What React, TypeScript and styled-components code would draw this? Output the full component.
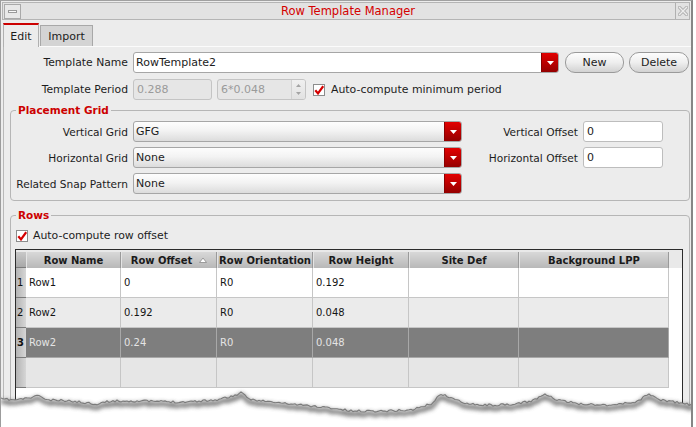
import React from "react";
import styled, { createGlobalStyle, css } from "styled-components";

const Global = createGlobalStyle`
  html, body { margin: 0; padding: 0; background: #fff; }
  body { font-family: "DejaVu Sans", "Liberation Sans", sans-serif; font-size: 11px; color: #1c1c1c; }
  #root { width: 696px; height: 427px; overflow: hidden; }
`;

const Window = styled.div`
  position: relative;
  width: 693px;
  height: 427px;
  box-sizing: border-box;
  border-left: 1px solid #9c9c9c;
  border-top: 1px solid #a0a0a0;
  border-right: 2px solid #868686;
  background: #ececec;
  display: flex;
  flex-direction: column;
  overflow: hidden;
`;

const TitleBar = styled.div`
  margin: 1px 1px 0 1px;
  height: 18px;
  box-sizing: border-box;
  border: 1px solid #b4b4b4;
  background: #e2e2e2;
  display: flex;
  align-items: center;
  flex-shrink: 0;
`;

const MinButton = styled.div`
  width: 17px;
  height: 15px;
  box-sizing: border-box;
  margin-left: 1px;
  border: 1px solid #a9a9a9;
  background: #e8e8e8;
  display: flex;
  align-items: center;
  justify-content: center;
`;

const MinBar = styled.div`
  width: 9px;
  height: 3px;
  box-sizing: border-box;
  border: 1px solid #9a9a9a;
  background: #fafafa;
`;

const Title = styled.div`
  flex: 1;
  text-align: center;
  color: #d40000;
  font-size: 11.5px;
  line-height: 16px;
`;

const CloseButton = styled.div`
  width: 14px;
  height: 16px;
  box-sizing: border-box;
  border-left: 1px solid #b0b0b0;
  display: flex;
  align-items: center;
  justify-content: center;
`;

const TabBar = styled.div`
  margin-top: 3px;
  padding-left: 2px;
  height: 23px;
  display: flex;
  align-items: flex-end;
  flex-shrink: 0;
`;

const Tab = styled.div<{ $active?: boolean }>`
  box-sizing: border-box;
  display: flex;
  align-items: center;
  justify-content: center;
  font-size: 11px;
  ${(p) =>
    p.$active
      ? css`
          width: 36px;
          height: 24px;
          border-top: 2px solid #cc0000;
          border-left: 1px solid #b0b0b0;
          border-right: 1px solid #b0b0b0;
          background: #ececec;
          margin-bottom: -1px;
          position: relative;
          z-index: 1;
          padding-top: 1px;
        `
      : css`
          width: 53px;
          height: 21px;
          margin-left: 1px;
          border: 1px solid #a8a8a8;
          border-bottom: none;
          background: #d4d4d4;
          padding-top: 1px;
        `}
`;

const Panel = styled.div`
  margin-left: 2px;
  flex: 1;
  border-top: 1px solid #fbfbfb;
  border-left: 1px solid #b8b8b8;
  padding-top: 5px;
  display: flex;
  flex-direction: column;
  min-height: 0;
`;

const FormRow = styled.div<{ $mt?: number }>`
  display: flex;
  align-items: center;
  height: 21px;
  gap: 5px;
  margin-top: ${(p) => p.$mt ?? 0}px;
  flex-shrink: 0;
`;

const Label = styled.div<{ $w?: number }>`
  width: ${(p) => p.$w ?? 124}px;
  flex-shrink: 0;
  display: flex;
  justify-content: flex-end;
  white-space: nowrap;
  font-size: 10.8px;
`;

const GridLabel = styled.div`
  display: flex;
  justify-content: flex-end;
  align-items: center;
  padding-right: 5px;
  white-space: nowrap;
  font-size: 10.6px;
`;

const ComboBox = styled.div<{ $w?: number; $white?: boolean }>`
  width: ${(p) => (p.$w ? `${p.$w}px` : "auto")};
  height: 21px;
  box-sizing: border-box;
  border: 1px solid #a6a6a6;
  border-radius: 3px;
  background: ${(p) =>
    p.$white ? "#fff" : "linear-gradient(#fdfdfd, #f3f3f3 45%, #dcdcdc)"};
  display: flex;
  align-items: stretch;
  overflow: hidden;
  flex-shrink: 0;
`;

const ComboText = styled.div`
  flex: 1;
  padding-left: 2px;
  display: flex;
  align-items: center;
  font-size: 11px;
`;

const ComboArrow = styled.div`
  width: 16px;
  background: linear-gradient(#e20000, #b80000 55%, #940000);
  border-left: 1px solid #8a0000;
  display: flex;
  align-items: center;
  justify-content: center;
`;

const PillButton = styled.div<{ $w: number; $ml?: number }>`
  width: ${(p) => p.$w}px;
  height: 21px;
  margin-left: ${(p) => p.$ml ?? 0}px;
  box-sizing: border-box;
  border: 1px solid #9a9a9a;
  border-radius: 10px;
  background: linear-gradient(#fdfdfd, #eeeeee 50%, #d2d2d2);
  display: flex;
  align-items: center;
  justify-content: center;
  font-size: 11px;
  flex-shrink: 0;
`;

const TextField = styled.div<{ $w: number; $disabled?: boolean }>`
  width: ${(p) => p.$w}px;
  height: 21px;
  box-sizing: border-box;
  border: 1px solid ${(p) => (p.$disabled ? "#c4c4c4" : "#bdbdbd")};
  border-radius: 3px;
  background: ${(p) => (p.$disabled ? "#e6e6e6" : "#fff")};
  color: ${(p) => (p.$disabled ? "#9a9a9a" : "#1c1c1c")};
  padding-left: 3px;
  display: flex;
  align-items: center;
  font-size: 11px;
  flex-shrink: 0;
  overflow: hidden;
`;

const SpinText = styled.div`
  flex: 1;
`;

const Spinner = styled.div`
  width: 14px;
  align-self: stretch;
  border-left: 1px solid #d2d2d2;
  background: linear-gradient(#f0f0f0, #e2e2e2);
  display: flex;
  flex-direction: column;
  align-items: center;
  justify-content: space-between;
  padding: 4px 0;
  box-sizing: border-box;
`;

const CheckBox = styled.div<{ $ml?: number }>`
  width: 12px;
  height: 12px;
  margin-left: ${(p) => p.$ml ?? 0}px;
  box-sizing: border-box;
  border: 1px solid #8c8c8c;
  background: #fff;
  display: flex;
  align-items: center;
  justify-content: center;
  flex-shrink: 0;
`;

const CheckLabel = styled.div<{ $ml?: number }>`
  margin-left: ${(p) => p.$ml ?? 0}px;
  white-space: nowrap;
  font-size: 10.9px;
`;

const Group = styled.div<{ $mt: number; $grow?: boolean }>`
  position: relative;
  margin: ${(p) => p.$mt}px 1px 0 6px;
  border: 1px solid #b6b6b6;
  border-radius: 4px;
  ${(p) =>
    p.$grow
      ? css`
          flex: 1;
          margin-bottom: -12px;
          padding-top: 12px;
          display: flex;
          flex-direction: column;
          min-height: 0;
        `
      : css`
          padding: 10px 0 6px 0;
          flex-shrink: 0;
        `}
`;

const Legend = styled.div`
  position: absolute;
  top: -7px;
  left: 5px;
  padding: 0 2px;
  background: #ececec;
  color: #cc0000;
  font-weight: bold;
  font-size: 10.5px;
  line-height: 13px;
`;

const GridForm = styled.div`
  display: grid;
  grid-template-columns: 122px 329px 121px 80px;
  grid-auto-rows: 21px;
  row-gap: 5px;
`;

const CheckRow = styled.div`
  display: flex;
  align-items: center;
  gap: 5px;
  height: 15px;
  margin-left: 5px;
  flex-shrink: 0;
`;

const TableFrame = styled.div`
  margin: 6px 0 0 4px;
  width: 668px;
  box-sizing: border-box;
  border: 1px solid #2b2b2b;
  border-bottom: none;
  background: #fff;
  flex: 1;
  display: flex;
  flex-direction: column;
`;

const HeaderBand = styled.div`
  display: flex;
  background: #e9e9e9;
  padding-top: 2px;
`;

const HeadCell = styled.div<{ $w: number }>`
  width: ${(p) => p.$w}px;
  height: 16px;
  box-sizing: border-box;
  flex-shrink: 0;
  background: linear-gradient(#d8d8d8, #b8b8b8);
  border-right: 1px solid #9a9a9a;
  border-left: 1px solid #e4e4e4;
  font-weight: bold;
  font-size: 10px;
  color: #1a1a1a;
  white-space: nowrap;
  display: flex;
  align-items: center;
  justify-content: center;
  gap: 7px;
`;

const CornerCell = styled.div`
  width: 10px;
  height: 16px;
  box-sizing: border-box;
  flex-shrink: 0;
  background: linear-gradient(#c8c8c8, #a8a8a8);
  border-bottom: 1px solid #7a7a7a;
`;

type Tone = "white" | "alt" | "sel" | "empty";

const toneBg: Record<Tone, string> = {
  white: "#ffffff",
  alt: "#ebebeb",
  sel: "#7e7e7e",
  empty: "#e6e6e6",
};

const DataRow = styled.div`
  display: flex;
  height: 30px;
`;

const RowHead = styled.div<{ $bold?: boolean }>`
  width: 10px;
  box-sizing: border-box;
  flex-shrink: 0;
  background: linear-gradient(to right, #b4b4b4, #d6d6d6);
  border-bottom: 1px solid #7a7a7a;
  font-size: 10px;
  font-weight: ${(p) => (p.$bold ? "bold" : "normal")};
  color: #111;
  display: flex;
  align-items: center;
  padding-left: 1px;
`;

const Cell = styled.div<{ $w: number; $tone: Tone }>`
  width: ${(p) => p.$w}px;
  box-sizing: border-box;
  flex-shrink: 0;
  background: ${(p) => toneBg[p.$tone]};
  color: ${(p) => (p.$tone === "sel" ? "#e4e4e4" : "#151515")};
  border-right: 1px solid ${(p) => (p.$tone === "sel" ? "#a8a8a8" : "#c6c6c6")};
  border-bottom: 1px solid ${(p) => (p.$tone === "sel" ? "#a8a8a8" : "#c6c6c6")};
  padding-left: 3px;
  display: flex;
  align-items: center;
  font-size: 10px;
  white-space: nowrap;
`;

const TearLayer = styled.svg`
  position: absolute;
  left: 0;
  top: 380px;
  width: 693px;
  height: 47px;
  pointer-events: none;
  z-index: 5;
`;

const DownArrow = () => (
  <svg width="7" height="4" viewBox="0 0 7 4">
    <polygon points="0,0 7,0 3.5,4" fill="#fff" />
  </svg>
);

const CheckMark = () => (
  <svg width="10" height="10" viewBox="0 0 10 10">
    <path d="M1.3 5.2 L4 8.4 L9.2 1.2" stroke="#d40000" strokeWidth="2.2" fill="none" strokeLinejoin="miter" />
  </svg>
);

const SortUp = () => (
  <svg width="8" height="6" viewBox="0 0 8 6">
    <polygon points="0.5,5.5 4,1 7.5,5.5" fill="#fff" stroke="#8a8a8a" strokeWidth="0.8" />
  </svg>
);

const CloseGlyph = () => (
  <svg width="10" height="10" viewBox="0 0 10 10">
    <path d="M1.5 1.5 L8.5 8.5 M8.5 1.5 L1.5 8.5" stroke="#b2b2b2" strokeWidth="3.2" strokeLinecap="square" />
    <path d="M1.5 1.5 L8.5 8.5 M8.5 1.5 L1.5 8.5" stroke="#eeeeee" strokeWidth="1.3" strokeLinecap="square" />
  </svg>
);

const SpinUp = () => (
  <svg width="5" height="3" viewBox="0 0 5 3">
    <polygon points="0,3 5,3 2.5,0" fill="#a4a4a4" />
  </svg>
);
const SpinDown = () => (
  <svg width="5" height="3" viewBox="0 0 5 3">
    <polygon points="0,0 5,0 2.5,3" fill="#a4a4a4" />
  </svg>
);

const CTRL: [number, number][] = [
  [0, 398], [15, 399], [33, 396], [38, 394], [45, 399], [70, 400], [95, 403],
  [110, 400], [140, 400], [180, 401], [215, 399], [232, 395], [240, 392],
  [248, 398], [270, 401], [300, 404], [330, 407], [350, 410], [380, 410],
  [410, 409], [430, 403], [440, 393], [448, 396], [460, 401], [480, 404],
  [510, 404], [530, 400], [545, 393], [555, 399], [580, 403], [610, 404],
  [635, 401], [648, 393], [660, 399], [680, 402], [696, 405],
];

function buildEdge(): [number, number][] {
  let seed = 11;
  const rnd = () => {
    seed = (seed * 16807) % 2147483647;
    return seed / 2147483647;
  };
  const pts: [number, number][] = [];
  for (let x = 0; x <= 696; x += 2) {
    let i = 0;
    while (i < CTRL.length - 2 && CTRL[i + 1][0] < x) i++;
    const [x0, y0] = CTRL[i];
    const [x1, y1] = CTRL[i + 1];
    const t = Math.min(1, Math.max(0, (x - x0) / (x1 - x0)));
    const y = y0 + (y1 - y0) * t + (rnd() - 0.5) * 2.2;
    pts.push([x, y - 380]);
  }
  return pts;
}

const EDGE = buildEdge();
const edgeStr = EDGE.map(([x, y]) => `${x},${y.toFixed(1)}`).join(" ");
const shadowStr = EDGE.map(([x, y]) => `${x},${(y + 3).toFixed(1)}`).join(" ");

const TornEdge = () => (
  <TearLayer viewBox="0 0 693 47">
    <defs>
      <filter id="tearBlur" x="-5%" y="-50%" width="110%" height="200%">
        <feGaussianBlur stdDeviation="1.9" />
      </filter>
    </defs>
    <path d={`M0,47 L${edgeStr} L696,47 Z`} fill="#fff" />
    <polyline points={shadowStr} fill="none" stroke="#4e4e4e" strokeWidth="4" opacity="0.8" filter="url(#tearBlur)" />
    <polyline points={edgeStr} fill="none" stroke="#7a7a7a" strokeWidth="1.1" />
  </TearLayer>
);

const COLUMNS: { label: string; w: number; sort?: boolean }[] = [
  { label: "Row Name", w: 95 },
  { label: "Row Offset", w: 96, sort: true },
  { label: "Row Orientation", w: 96 },
  { label: "Row Height", w: 96 },
  { label: "Site Def", w: 110 },
  { label: "Background LPP", w: 150 },
];

const ROWS: { n: string; tone: Tone; cells: string[] }[] = [
  { n: "1", tone: "white", cells: ["Row1", "0", "R0", "0.192", "", ""] },
  { n: "2", tone: "alt", cells: ["Row2", "0.192", "R0", "0.048", "", ""] },
  { n: "3", tone: "sel", cells: ["Row2", "0.24", "R0", "0.048", "", ""] },
  { n: "", tone: "empty", cells: ["", "", "", "", "", ""] },
];

const GRID_ROWS = [
  { label: "Vertical Grid", value: "GFG", offLabel: "Vertical Offset", off: "0" },
  { label: "Horizontal Grid", value: "None", offLabel: "Horizontal Offset", off: "0" },
  { label: "Related Snap Pattern", value: "None" },
];

export default function App() {
  return (
    <>
      <Global />
      <Window>
        <TitleBar>
          <MinButton>
            <MinBar />
          </MinButton>
          <Title>Row Template Manager</Title>
          <CloseButton>
            <CloseGlyph />
          </CloseButton>
        </TitleBar>

        <TabBar>
          <Tab $active>Edit</Tab>
          <Tab>Import</Tab>
        </TabBar>

        <Panel>
          <FormRow>
            <Label>Template Name</Label>
            <ComboBox $w={426} $white>
              <ComboText>RowTemplate2</ComboText>
              <ComboArrow>
                <DownArrow />
              </ComboArrow>
            </ComboBox>
            <PillButton $w={59} $ml={1}>New</PillButton>
            <PillButton $w={60}>Delete</PillButton>
          </FormRow>

          <FormRow $mt={6}>
            <Label>Template Period</Label>
            <TextField $w={79} $disabled>0.288</TextField>
            <TextField $w={89} $disabled>
              <SpinText>6*0.048</SpinText>
              <Spinner>
                <SpinUp />
                <SpinDown />
              </Spinner>
            </TextField>
            <CheckBox $ml={2}>
              <CheckMark />
            </CheckBox>
            <CheckLabel $ml={1}>Auto-compute minimum period</CheckLabel>
          </FormRow>

          <Group $mt={10}>
            <Legend>Placement Grid</Legend>
            <GridForm>
              {GRID_ROWS.map((r) => (
                <React.Fragment key={r.label}>
                  <GridLabel>{r.label}</GridLabel>
                  <ComboBox>
                    <ComboText>{r.value}</ComboText>
                    <ComboArrow>
                      <DownArrow />
                    </ComboArrow>
                  </ComboBox>
                  {r.offLabel ? (
                    <>
                      <GridLabel>{r.offLabel}</GridLabel>
                      <TextField $w={80}>{r.off}</TextField>
                    </>
                  ) : null}
                </React.Fragment>
              ))}
            </GridForm>
          </Group>

          <Group $mt={14} $grow>
            <Legend>Rows</Legend>
            <CheckRow>
              <CheckBox>
                <CheckMark />
              </CheckBox>
              <CheckLabel>Auto-compute row offset</CheckLabel>
            </CheckRow>
            <TableFrame>
              <HeaderBand>
                <CornerCell />
                {COLUMNS.map((c) => (
                  <HeadCell key={c.label} $w={c.w}>
                    <span>{c.label}</span>
                    {c.sort ? <SortUp /> : null}
                  </HeadCell>
                ))}
              </HeaderBand>
              {ROWS.map((r, ri) => (
                <DataRow key={ri}>
                  <RowHead $bold={r.tone === "sel"}>{r.n}</RowHead>
                  {r.cells.map((v, ci) => (
                    <Cell key={ci} $w={COLUMNS[ci].w} $tone={r.tone}>
                      {v}
                    </Cell>
                  ))}
                </DataRow>
              ))}
            </TableFrame>
          </Group>
        </Panel>

        <TornEdge />
      </Window>
    </>
  );
}
